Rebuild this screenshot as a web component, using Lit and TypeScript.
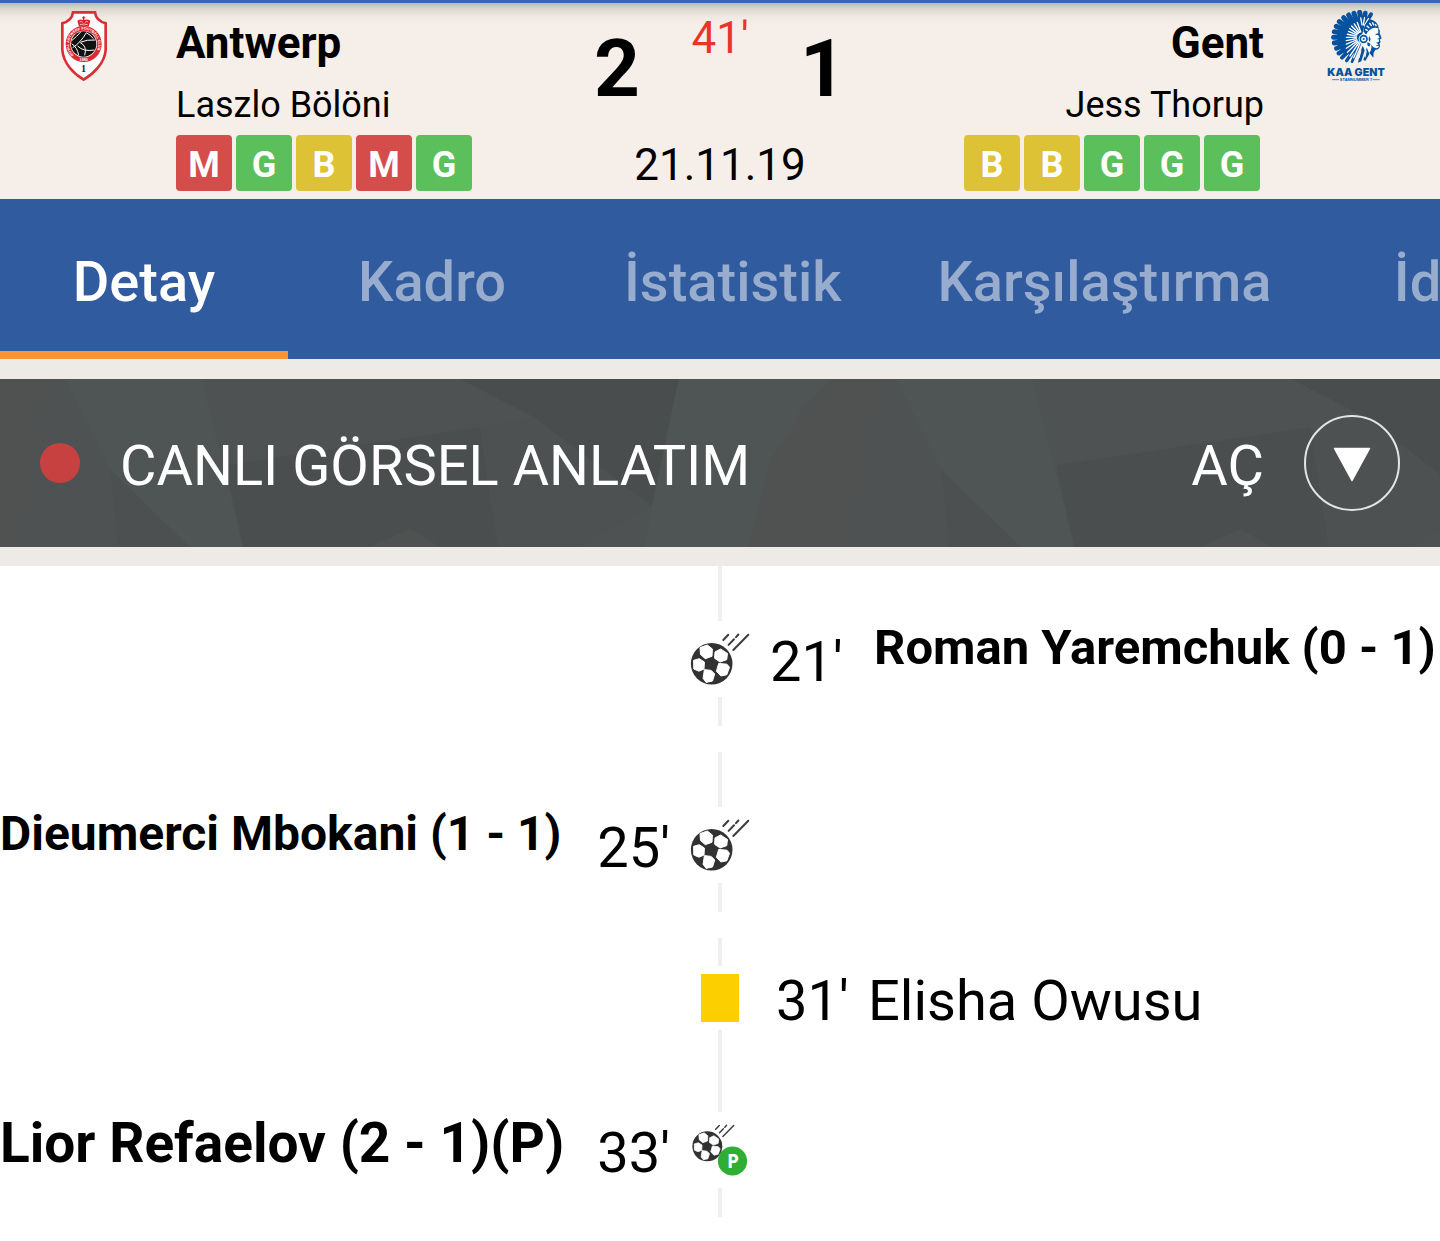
import { LitElement, html, svg, css } from "lit";
import { customElement, property, state } from "lit/decorators.js";
import { classMap } from "lit/directives/class-map.js";

type Result = "M" | "G" | "B";
type Side = "home" | "away";
type Kind = "goal" | "penalty" | "card";

interface MatchEvent {
  kind: Kind;
  side: Side;
  minute: string;
  text: string;
  size: string;
}

const RESULT_NAMES: Record<Result, string> = { M: "loss", G: "win", B: "draw" };

const TABS = ["Detay", "Kadro", "İstatistik", "Karşılaştırma", "İddaa"];

const EVENTS: MatchEvent[] = [
  { kind: "goal", side: "away", minute: "21'", text: "Roman Yaremchuk (0 - 1)", size: "medium" },
  { kind: "goal", side: "home", minute: "25'", text: "Dieumerci Mbokani (1 - 1)", size: "small" },
  { kind: "card", side: "away", minute: "31'", text: "Elisha Owusu", size: "plain" },
  { kind: "penalty", side: "home", minute: "33'", text: "Lior Refaelov (2 - 1)(P)", size: "large" },
];

const antwerpCrest = html`
  <svg class="crest crest-home" viewBox="60 30 144 216" aria-hidden="true">
    <path d="M99 37 H165 Q168 62 197 70 V150 C194 190 160 222 131 239 C102 222 70 190 67 150 V70 Q96 62 99 37Z"
      fill="#fff" stroke="#d92f35" stroke-width="8" />
    <path d="M117 80 L112 62 Q122 56 129 60 V55 H126 V52 H129 V49 H133 V52 H136 V55 H133 V60 Q142 56 151 62 L146 80 Q131 74 117 80Z" fill="#e0212b" />
    <path d="M119 66 q5 -4 9 1 M135 67 q5 -5 9 -1 M120 74 q11 -4 23 0" stroke="#fff" stroke-width="2" fill="none" />
    <circle cx="131" cy="132" r="54" fill="#dd2a31" />
    <circle cx="131" cy="132" r="40" fill="#fff" />
    <circle cx="131" cy="132" r="38" fill="#111" />
    <g stroke="#fff" stroke-width="3" fill="none">
      <path d="M95 122 Q110 110 122 96 M98 143 Q122 128 139 98 M121 127 Q140 118 166 120 M113 138 Q130 156 163 150 M121 128 Q142 138 134 166 M95 131 Q112 142 116 166 M139 98 Q151 104 160 116" />
    </g>
    <defs><path id="ring" d="M101 165 A44 44 0 1 1 161 165" /></defs>
    <text class="ring-text"><textPath href="#ring">ROYAL ANTWERP FOOTBALL CLUB</textPath></text>
    <text class="ring-year" x="131" y="182" text-anchor="middle">1880</text>
    <text class="crest-number" x="131" y="216" text-anchor="middle">1</text>
  </svg>
`;

/* Each entry is a feather of the headdress: tip position, blade width and
   how far along the blade its white vane begins. */
const FEATHERS: [number, number, number, number][] = [
  [183, 43, 12, 0.3], [166, 39, 14, 0.3], [149, 37, 15, 0.35], [132, 40, 15, 0.38],
  [116, 45, 15, 0.4], [101, 53, 15, 0.42], [88, 65, 15, 0.44], [79, 79, 15, 0.46],
  [73, 95, 15, 0.46], [71, 112, 15, 0.44], [73, 129, 15, 0.42], [79, 145, 14, 0.38],
  [86, 160, 13, 0.32], [96, 173, 12, 0.26], [110, 182, 10, 0.2], [126, 185, 8, 0.16],
];

const gentCrest = html`
  <svg class="crest crest-away" viewBox="45 30 186 216" aria-hidden="true">
    <path d="M168 50 L110 60 L82 95 L82 135 L104 165 L138 158 L152 118Z" fill="#07529f" />
    ${FEATHERS.map(([x, y, w], i) => {
      const cy = i < 3 ? 85 : 112;
      return svg`<path d="M${x} ${y} L158 ${cy}" fill="none" stroke="#07529f" stroke-width=${w} stroke-linecap="round" />`;
    })}
    ${FEATHERS.map(([x, y, , k], i) => {
      const cy = i < 3 ? 85 : 112;
      const at = (t: number) => [x + (158 - x) * t, y + (cy - y) * t];
      const [ax, ay] = at(k);
      const [bx, by] = at(0.78);
      return svg`<path d="M${ax} ${ay} L${bx} ${by}" stroke="#fff" stroke-width="4" stroke-linecap="round" />`;
    })}
    <path d="M163 78 Q180 66 198 74 Q209 80 209 96 L214 114 L209 119 L211 132 L206 147 L191 152 L189 168 L168 148 L152 122Z" fill="#fff" />
    <path d="M206 84 Q211 92 209 99 L215 115 L209 119 L212 126 L209 130 L210 139 Q207 150 196 149 L191 158 L190 173 L178 158 Q186 150 184 134 L190 142 L200 145 Q206 143 207 138 L197 137 L206 133 L198 128 L207 125 L206 117 L200 118 L209 113 L204 104 L195 106 Q200 99 205 100 Q203 90 206 84Z" fill="#07529f" />
    <path d="M172 126 L182 132 L178 140 L172 136Z M178 108 Q184 116 180 126 L174 118Z" fill="#07529f" />
    <path d="M160 94 Q163 70 180 58 Q204 64 207 86 Q184 76 168 104Z" fill="#07529f" />
    <path d="M166 88 L173 92 M170 77 L178 84 M178 69 L185 78 M187 67 L192 76 M196 72 L199 79" stroke="#fff" stroke-width="4" />
    <circle cx="161" cy="117" r="15" fill="#fff" />
    <circle cx="161" cy="117" r="10" fill="none" stroke="#07529f" stroke-width="5" />
    <circle cx="161" cy="117" r="3" fill="#07529f" />
    <path d="M158 137 L164 151 L154 184 L144 188 L150 160Z M170 142 L178 162 L166 183 L160 179 L167 160Z" fill="#07529f" />
    <path d="M153 152 L147 174 M169 152 L165 172" stroke="#fff" stroke-width="3" />
    <text class="gent-name" x="138" y="227" text-anchor="middle">KAA GENT</text>
    <path d="M66 239 H87 M188 239 H209" stroke="#07529f" stroke-width="2" />
    <text class="gent-sub" x="138" y="243" text-anchor="middle">STAMNUMMER 7</text>
  </svg>
`;

const ballShape = svg`
  <circle cx="21.7" cy="31.7" r="20.8" fill="#323232" />
  <g fill="#fff" stroke="#fff" stroke-width="1" stroke-linejoin="round">
    <path d="M10 15.6 L17.3 13 L22.4 17 L22 24.3 L15.3 26.7 L10.5 22.5Z" />
    <path d="M25 19.9 L30.7 17 L37.5 21.5 L36.7 27.7 L30 30 L24.6 26.3Z" />
    <path d="M28.7 31.4 L37 32.2 L39.5 35.3 L36.8 42.8 L30.9 44 L26.4 39.3Z" />
    <path d="M14.4 37.6 L21.2 38.4 L24.7 42 L22.5 49 L16.1 50.4 L13.1 46.3Z" />
    <path d="M3.6 28.3 L9.3 26.7 L14.4 30 L14 37 L8.9 39.2 L3.8 37Z" />
  </g>
  <path d="M33.3 8 L38.3 2.7 M38.6 12.9 L44 7.3 M46 5.2 L48.4 2.5 M43.3 18 L58.3 2.7" stroke="#3c3c3c" stroke-width="2" stroke-linecap="round" />
`;

@customElement("team-form")
class TeamForm extends LitElement {
  @property() results = "";

  static styles = css`
    :host { display: block; }
    .list { display: flex; gap: 4px; margin: 0; padding: 0; list-style: none; }
    .result {
      width: 56px;
      height: 56px;
      border-radius: 4px;
      color: #fff;
      font-size: 36px;
      font-weight: 700;
      line-height: 60px;
      text-align: center;
    }
    .loss { background: #d44d4b; }
    .win { background: #5bc05c; }
    .draw { background: #dec235; }
  `;

  render() {
    return html`
      <ul class="list">
        ${[...this.results].map(
          (r) => html`<li class="result ${RESULT_NAMES[r as Result]}">${r}</li>`,
        )}
      </ul>
    `;
  }
}

@customElement("match-header")
class MatchHeader extends LitElement {
  static styles = css`
    :host { display: block; }
    .header {
      display: grid;
      grid-template-columns: 176px 1fr 252px 1fr 176px;
      border-top: 3px solid #3a67b5;
      background: linear-gradient(#beb9b3, #ddd7d0 6px, #f1eae4 14px, #f6efe9 22px);
    }
    .crest { display: block; height: 72px; }
    .crest-home { width: 48px; margin: 7px auto 0 60px; }
    .crest-away { width: 62px; margin: 7px 53px 0 auto; }
    .ring-text, .ring-year { font: 700 11px "Liberation Sans", sans-serif; fill: #fff; }
    .crest-number { font: 700 28px "Liberation Serif", serif; fill: #111; }
    .gent-name { font: 900 32px Inter, sans-serif; fill: #07529f; }
    .gent-sub { font: 700 12px "Liberation Sans", sans-serif; fill: #07529f; }
    .team { display: flex; flex-direction: column; align-items: flex-start; padding: 14px 0 8px; }
    .away { align-items: flex-end; }
    .name { margin: 0; font-size: 44px; font-weight: 700; line-height: 52px; }
    .coach { margin: 14px 0 8px; font-size: 36px; line-height: 44px; }
    .away team-form { margin-right: 4px; }
    .score {
      display: grid;
      grid-template-columns: 46px 1fr 46px;
      grid-template-rows: 1fr auto;
      padding: 9px 0 8px;
      text-align: center;
    }
    .goals { padding-top: 10px; font-size: 80px; font-weight: 700; line-height: 94px; }
    .clock { color: #e8352c; font-size: 44px; line-height: 52px; }
    .date { grid-column: 1 / -1; font-size: 44px; line-height: 52px; }
  `;

  render() {
    return html`
      <header class="header">
        ${antwerpCrest}
        <div class="team">
          <h2 class="name">Antwerp</h2>
          <p class="coach">Laszlo Bölöni</p>
          <team-form results="MGBMG"></team-form>
        </div>
        <div class="score">
          <span class="goals">2</span>
          <span class="clock">41'</span>
          <span class="goals">1</span>
          <time class="date" datetime="2019-11-21">21.11.19</time>
        </div>
        <div class="team away">
          <h2 class="name">Gent</h2>
          <p class="coach">Jess Thorup</p>
          <team-form results="BBGGG"></team-form>
        </div>
        ${gentCrest}
      </header>
    `;
  }
}

@customElement("live-bar")
class LiveBar extends LitElement {
  static styles = css`
    :host { display: block; padding: 20px 0 19px; background: #eeebe6; }
    .bar {
      display: grid;
      width: 100%;
      height: 168px;
      padding: 0;
      border: 0;
      background: #4e5252;
      color: #fff;
      font: inherit;
      font-size: 56px;
      line-height: 66px;
      text-align: left;
      cursor: pointer;
    }
    .pattern, .content { grid-area: 1 / 1; }
    .pattern { width: 100%; height: 168px; }
    .content { display: flex; align-items: center; gap: 40px; padding: 0 40px; }
    .dot { width: 40px; height: 40px; border-radius: 50%; background: #c84141; }
    .title { flex: 1; padding-top: 6px; }
    .action { padding-top: 6px; }
    .toggle { width: 96px; height: 96px; }
  `;

  render() {
    return html`
      <button class="bar" type="button">
        <svg class="pattern" aria-hidden="true">
          <defs>
            <pattern id="facets" width="831" height="168" patternUnits="userSpaceOnUse">
              <rect width="831" height="168" fill="#4e5252" />
              <path d="M0 0 H50 L20 168 H0Z" fill="#4f5251" />
              <path d="M66 0 H201 L243 168 H190 L110 90Z" fill="#4f5454" />
              <path d="M110 90 L190 168 H118Z" fill="#4d5050" />
              <path d="M201 0 H460 L533 38 L480 48 L230 88Z" fill="#4e5252" />
              <path d="M225 86 L480 48 L498 168 H243Z" fill="#4a4e4f" />
              <path d="M460 0 H679 L652 128 L533 38Z" fill="#4a4d4d" />
              <path d="M480 48 L533 38 L652 128 L580 168 H498Z" fill="#4e5151" />
              <path d="M370 168 L410 150 L440 168Z" fill="#505251" />
              <path d="M679 0 H831 L800 30 L760 130 L748 168 H645 L652 128Z" fill="#4f5454" />
              <path d="M831 0 V168 H748 L770 80 L815 20Z" fill="#4f5251" />
            </pattern>
          </defs>
          <rect width="100%" height="100%" fill="url(#facets)" />
        </svg>
        <span class="content">
          <span class="dot"></span>
          <span class="title">CANLI GÖRSEL ANLATIM</span>
          <span class="action">AÇ</span>
          <svg class="toggle" viewBox="0 0 96 96" aria-hidden="true">
            <circle cx="48" cy="48" r="47" fill="none" stroke="#e4e5e5" stroke-width="2" />
            <path d="M30.5 33.5 H65.5 L48 65.5Z" fill="#fff" stroke="#fff" stroke-width="1.5" stroke-linejoin="round" />
          </svg>
        </span>
      </button>
    `;
  }
}

@customElement("match-event")
class MatchEventRow extends LitElement {
  @property({ attribute: false }) event!: MatchEvent;

  static styles = css`
    :host { display: block; }
    .row {
      display: grid;
      grid-template-columns: minmax(0, 1fr) 76px minmax(0, 1fr);
      grid-template-rows: 55px 76px 29px;
      padding-bottom: 26px;
    }
    .card { grid-template-rows: 28px 64px 27px; padding-bottom: 0; }
    .rail { grid-column: 2; width: 4px; background: #efefef; justify-self: center; }
    .top { grid-row: 1; }
    .bottom { grid-row: 3; }
    .icon { grid-area: 2 / 2; place-self: center; display: block; width: 60px; height: 54px; }
    .yellow { width: 38px; height: 48px; background: #fcd000; }
    .spot { font: 700 19px "Open Sans", sans-serif; fill: #fff; }
    .side { grid-row: 2; display: flex; align-items: center; white-space: nowrap; }
    .home { grid-column: 1; justify-content: space-between; padding-right: 12px; }
    .away { grid-column: 3; flex-direction: row-reverse; justify-content: flex-end; padding-left: 12px; }
    .minute { padding-top: 6px; font-size: 56px; line-height: 66px; }
    .player { padding-bottom: 22px; font-weight: 700; line-height: 66px; }
    .small { font-size: 48px; }
    .medium { font-size: 49px; }
    .large { padding-bottom: 14px; font-size: 55px; }
    .plain { padding: 6px 0 0; font-size: 56px; font-weight: 400; }
    .away .minute { width: 104px; }
    .card .minute { width: 92px; }
    .card .away { padding-left: 18px; }
  `;

  private icon() {
    const { kind } = this.event;
    if (kind === "card") return html`<span class="icon yellow"></span>`;
    if (kind === "goal") {
      return html`<svg class="icon" viewBox="0 0 60 54" aria-hidden="true">${ballShape}</svg>`;
    }
    return html`
      <svg class="icon" viewBox="0 0 60 54" aria-hidden="true">
        <g transform="translate(1.7 0.5) scale(0.72)">${ballShape}</g>
        <circle cx="42.5" cy="38" r="14.6" fill="#2fae36" />
        <text class="spot" x="43" y="45" text-anchor="middle">P</text>
      </svg>
    `;
  }

  render() {
    const e = this.event;
    return html`
      <div class=${classMap({ row: true, card: e.kind === "card" })}>
        <span class="rail top"></span>
        ${this.icon()}
        <span class="rail bottom"></span>
        <div class="side ${e.side}">
          <span class="player ${e.size}">${e.text}</span>
          <span class="minute">${e.minute}</span>
        </div>
      </div>
    `;
  }
}

@customElement("app-root")
class AppRoot extends LitElement {
  @state() private active = 0;

  static styles = css`
    :host {
      display: block;
      overflow: hidden;
      background: #fff;
      color: #000;
      font-family: Roboto, "Liberation Sans", sans-serif;
    }
    .tabs { display: flex; overflow: hidden; background: #315b9f; }
    .tab {
      flex: none;
      box-sizing: border-box;
      min-width: 288px;
      height: 160px;
      padding: 14px 48px 0;
      border: 0;
      border-bottom: 8px solid transparent;
      background: none;
      color: #98acce;
      font: inherit;
      font-size: 56px;
      font-weight: 500;
      line-height: 66px;
      cursor: pointer;
    }
    .selected { border-bottom-color: #fd9431; color: #fff; }
    .events { margin: 0; padding: 0; list-style: none; }
  `;

  render() {
    return html`
      <match-header></match-header>
      <nav class="tabs">
        ${TABS.map(
          (label, i) => html`
            <button
              type="button"
              class=${classMap({ tab: true, selected: i === this.active })}
              @click=${() => (this.active = i)}
            >${label}</button>
          `,
        )}
      </nav>
      <live-bar></live-bar>
      <ol class="events">
        ${EVENTS.map((e) => html`<li><match-event .event=${e}></match-event></li>`)}
      </ol>
    `;
  }
}
